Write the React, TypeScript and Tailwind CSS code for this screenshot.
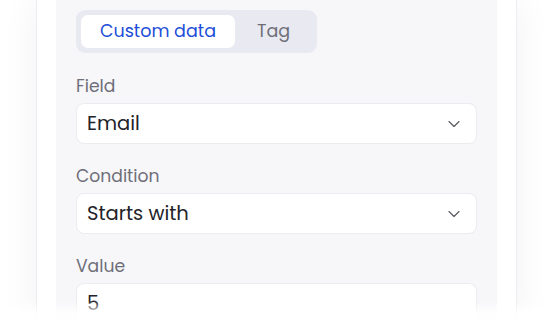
import React from 'react';
import { ChevronDown } from 'lucide-react';

const SelectBox = ({ value }: { value: string }) => (
  <div className="h-[41px] bg-white border border-[#ebebf0] rounded-[8px] flex items-center justify-between pl-[10px] pr-[12px]">
    <span className="text-[19.5px] text-[#222228]">{value}</span>
    <ChevronDown size={20} strokeWidth={1.4} className="text-[#5a5a62]" />
  </div>
);

const Field = ({ label, children }: { label: string, children: React.ReactNode }) => (
  <div className="flex flex-col gap-[5px]">
    <div className="h-[24px] leading-[24px] text-[17.2px] text-[#6e6e78]">{label}</div>
    {children}
  </div>
);

export default function App() {
  return (
    <div
      className="relative w-[556px] h-[325px] overflow-hidden bg-white"
      style={{ fontFamily: 'Poppins, Inter, "Noto Sans", sans-serif' }}
    >
      <div className="ml-[36px] w-[481px] h-full bg-white border-x border-[#ececf2] shadow-[0_0_36px_rgba(0,0,0,0.06)] px-[19px]">
        <div className="h-full bg-[#f7f7fa] px-[20px] pt-[10px]">
          {/* tabs */}
          <div className="w-[241px] h-[43px] bg-[#e9eaf1] rounded-[9px] p-[5px] flex">
            <div className="w-[154px] h-full bg-white rounded-[7px] flex items-center justify-center text-[17.5px] text-[#1d4ed8]">
              Custom data
            </div>
            <div className="flex-1 flex items-center justify-center text-[17.5px] text-[#6e6e78]">Tag</div>
          </div>

          <div className="mt-[21px] flex flex-col gap-[20px]">
            <Field label="Field">
              <SelectBox value="Email" />
            </Field>
            <Field label="Condition">
              <SelectBox value="Starts with" />
            </Field>
            <Field label="Value">
              <div className="h-[41px] bg-white border border-[#ebebf0] rounded-[8px] flex items-center pl-[10px]">
                <span className="text-[19.5px] text-[#222228]">5</span>
              </div>
            </Field>
          </div>
        </div>
      </div>
      {/* bottom fade */}
      <div className="absolute left-0 right-0 bottom-0 h-[24px] bg-gradient-to-b from-white/0 via-white/90 to-white" />
    </div>
  );
}
